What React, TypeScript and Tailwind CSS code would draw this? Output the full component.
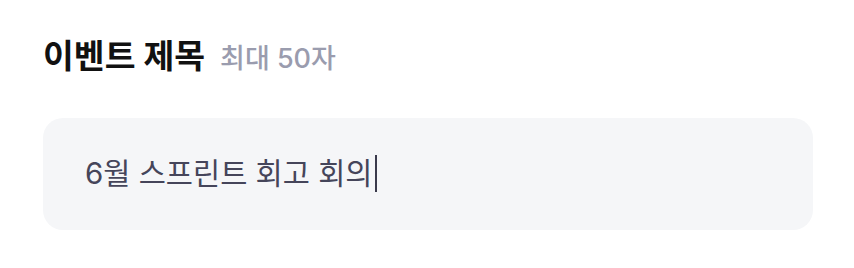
import React from "react";

const App = () => {
  const title = "6월 스프린트 회고 회의";

  return (
    <div
      className="min-h-screen w-full bg-white px-[43px] pt-[40px]"
      style={{ fontFamily: '"Inter", "Noto Sans CJK KR", sans-serif' }}
    >
      <div className="flex items-baseline gap-[15px]">
        <h2 className="text-[33.5px] font-bold leading-none text-[#111111]">이벤트 제목</h2>
        <span className="text-[27px] font-medium leading-none text-[#9a9cae]">최대 50자</span>
      </div>
      <div className="mt-[44px] flex h-[112px] w-[770px] items-center rounded-[20px] bg-[#f5f6f8] px-[42px]">
        <div className="flex items-center text-[29.5px] leading-none text-[#45455a]">
          <span>{title}</span>
          <span className="ml-[3px] h-[37px] w-[2px] bg-[#3a3a4c]" />
        </div>
      </div>
    </div>
  );
};

export default App;
